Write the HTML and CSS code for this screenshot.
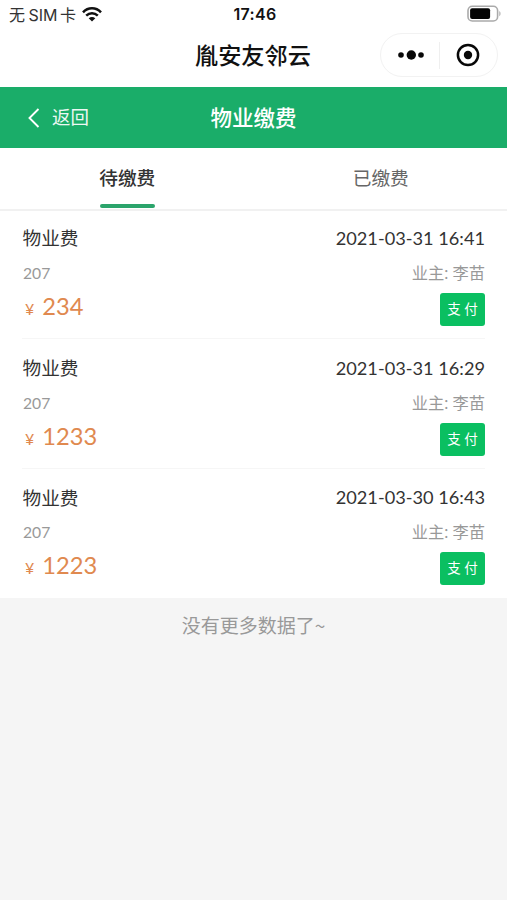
FILE: index.html
```html
<!DOCTYPE html>
<html lang="zh-CN">
<head>
<meta charset="utf-8">
<title>物业缴费</title>
<link rel="stylesheet" href="styles.css">
</head>
<body>
<header class="status">
  <div class="carrier"><span class="cjk">无</span><span class="sim">SIM</span><span class="cjk">卡</span>
    <svg class="wifi" width="20" height="15" viewBox="0 0 20 15"><g fill="none" stroke="#111" stroke-width="2.5"><path d="M1 5.3C6-.1 14-.1 19 5.3"/><path d="M4.2 8.7c3.400-3.400 8.200-3.400 11.600 0"/></g><path d="M6.700 11.300c2-1.700 4.600-1.700 6.600 0L10 14.600z" fill="#111"/></svg>
  </div>
  <time class="clock">17:46</time>
  <svg class="battery" width="34" height="18" viewBox="0 0 34 18"><rect x="1" y="1.200" width="29.600" height="14.800" rx="4.300" fill="#fff" stroke="#aaa" stroke-width="1.600"/><rect x="3.100" y="3.200" width="20" height="10.800" rx="2" fill="#050505"/><path d="M32.300 6v5.200c1.600-.8 1.600-4.400 0-5.200z" fill="#aaa"/></svg>
</header>
<div class="appbar">
  <h1 class="appname">胤安友邻云</h1>
  <div class="capsule">
    <svg width="116" height="42" viewBox="0 0 116 42"><g fill="#080808"><circle cx="20" cy="21" r="2.800"/><circle cx="30.300" cy="21" r="4.700"/><circle cx="40" cy="21" r="2.800"/><circle cx="87" cy="21" r="4.200"/></g><path d="M58.500 8v27" stroke="#efefef"/><circle cx="87" cy="21" r="10.100" fill="none" stroke="#080808" stroke-width="2.500"/></svg>
  </div>
</div>
<nav class="navbar">
  <a class="back"><svg width="12" height="20" viewBox="0 0 12 20"><path d="M10.500 1L1.500 10l9 9" fill="none" stroke="#fff" stroke-width="1.900"/></svg><span>返回</span></a>
  <h2 class="title">物业缴费</h2>
</nav>
<div class="tabs">
  <div class="tab active">待缴费</div>
  <div class="tab">已缴费</div>
</div>
<main class="list">
  <article class="bill">
    <div class="row head"><span>物业费</span><time class="date">2021-03-31 16:41</time></div>
    <div class="row sub"><span class="room">207</span><span class="owner">业主: 李苗</span></div>
    <div class="row foot"><span class="price"><small>¥</small>234</span><button class="pay">支 付</button></div>
  </article>
  <article class="bill">
    <div class="row head"><span>物业费</span><time class="date">2021-03-31 16:29</time></div>
    <div class="row sub"><span class="room">207</span><span class="owner">业主: 李苗</span></div>
    <div class="row foot"><span class="price"><small>¥</small>1233</span><button class="pay">支 付</button></div>
  </article>
  <article class="bill">
    <div class="row head"><span>物业费</span><time class="date">2021-03-30 16:43</time></div>
    <div class="row sub"><span class="room">207</span><span class="owner">业主: 李苗</span></div>
    <div class="row foot"><span class="price"><small>¥</small>1223</span><button class="pay">支 付</button></div>
  </article>
</main>
<p class="end">没有更多数据了~</p>
</body>
</html>
```
FILE: styles.css
```css
* { box-sizing: border-box; }
body {
  margin: 0;
  min-height: 900px;
  background: #f5f5f5;
  color: #333;
  font-family: Lato, "Noto Sans CJK SC", sans-serif;
}
h1, h2, p { margin: 0; }
.status {
  display: grid;
  grid-template-columns: 1fr auto 1fr;
  align-items: center;
  height: 29px;
  padding: 0 6px 0 9px;
  background: #fff;
}
.carrier { display: flex; align-items: center; height: 28px; color: #333; font: 16px/28px Inter, sans-serif; }
.cjk { padding-bottom: 2px; font-family: "Noto Sans CJK SC", sans-serif; font-size: 16px; }
.sim { margin: 0 2.5px 0 3.5px; }
.wifi { margin: 0 0 1px 6px; }
.clock { padding-bottom: 1px; color: #111; font: 600 16px/28px Inter, sans-serif; letter-spacing: .3px; }
.battery { justify-self: end; margin-bottom: 2px; }
.appbar {
  display: flex;
  justify-content: flex-end;
  align-items: center;
  height: 58px;
  padding: 0 9px 6px 0;
  background: #fff;
}
.appname {
  flex: 1;
  padding: 0 0 3px 195px;
  color: #111;
  font: 500 23.200px/50px "Noto Sans CJK SC", sans-serif;
  white-space: nowrap;
}
.capsule { width: 118px; height: 44px; border: 1px solid #f2f2f2; border-radius: 22px; }
.capsule svg { display: block; }
.navbar {
  display: grid;
  grid-template-columns: 1fr auto 1fr;
  align-items: center;
  height: 61px;
  background: #1aad69;
  color: #fff;
}
.back { display: flex; align-items: center; padding-left: 28px; font-size: 18.500px; line-height: 30px; }
.back span { margin-left: 12px; padding-bottom: 2px; opacity: .92; }
.title { font-size: 21.500px; font-weight: 500; line-height: 40px; }
.tabs { display: flex; height: 63px; border-bottom: 2px solid #f1f1f1; background: #fff; }
.tab {
  display: flex;
  flex-direction: column;
  align-items: center;
  flex: 1;
  padding: 11px 0 0 1px;
  color: #666;
  font-size: 18.700px;
  line-height: 39px;
}
.active { color: #333; font-weight: 500; }
.active::after { content: ""; width: 55px; height: 4px; margin-top: 6px; border-radius: 2px; background: #2ba46b; }
.list { height: 387px; padding: 0 22px; background: #fff; }
.bill { height: 129.500px; padding-top: 13px; border-top: 1px solid #f6f6f6; }
.bill:first-child { height: 127px; padding-top: 11px; border-top: 0; }
.row { display: flex; justify-content: space-between; align-items: center; }
.head { height: 34px; font-size: 18.700px; }
.head span { padding: 0 0 5px .5px; }
.date { padding-bottom: 2.5px; font-size: 18.200px; }
.sub { height: 35px; color: #999; font-size: 16.300px; }
.room { padding: 0 0 2px 1px; font-size: 15.700px; }
.owner { padding-bottom: 4px; }
.foot { height: 36px; }
.price { padding: 0 0 7px 3px; color: #e0894f; font-size: 23.700px; }
.price small { margin-right: 8px; font-size: 16px; }
.pay {
  width: 45px;
  height: 33px;
  padding: 0;
  border: 0;
  border-radius: 3px;
  background: #0abf61;
  color: #fff;
  font: 13.500px/33px Lato, "Noto Sans CJK SC", sans-serif;
}
.end { padding-top: 11px; color: #999; font: 19px/31px "Noto Sans CJK SC", sans-serif; text-align: center; }
```
